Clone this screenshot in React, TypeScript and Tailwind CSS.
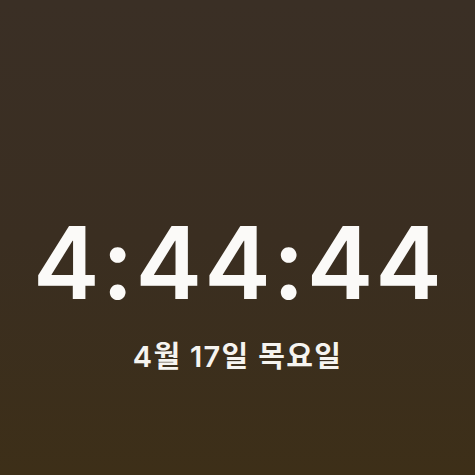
export default function App() {
  return (
    <div className="h-[475px] w-[475px] overflow-hidden bg-gradient-to-b from-[#3a2f25] via-[#3a2e21] to-[#3d2f18] flex flex-col items-center pt-[213px]">
      <div className="text-[100px] leading-none font-semibold text-[#fbfaf8] font-['Inter',sans-serif] tracking-[2px] pl-[2px]">
        4:44:44
      </div>
      <div className="mt-[29px] text-[29px] leading-none font-semibold text-[#f6f4f0] font-['Inter','Noto_Sans_CJK_KR',sans-serif] tracking-[1.3px]">
        4월 17일 목요일
      </div>
    </div>
  )
}
